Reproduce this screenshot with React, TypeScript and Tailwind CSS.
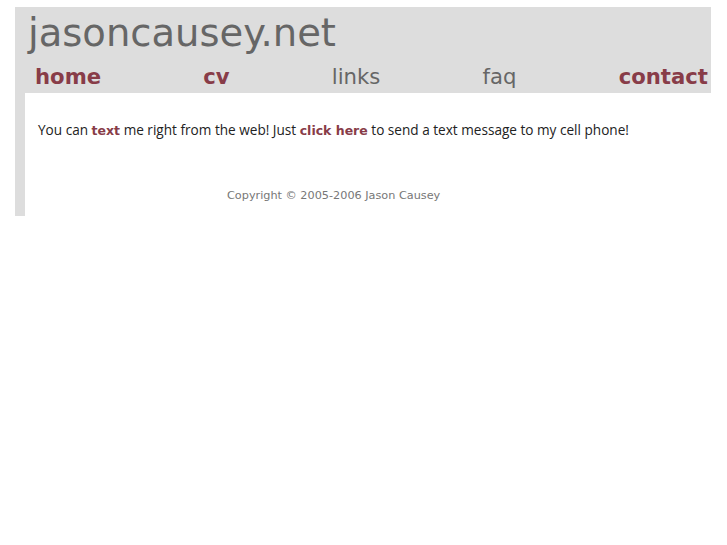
export default function App() {
  return (
    <div className="min-h-screen bg-white pt-[7px] pl-[15px] font-['DejaVu_Sans',sans-serif]">
      <div className="w-[696px]">
        <header className="h-[86px] bg-[#dddddd]">
          <h1 className="pl-[13px] pt-[3px] text-[38.5px] leading-[45px] text-[#666666]">
            jasoncausey.net
          </h1>
          <nav className="mt-[9px] flex justify-between pl-[20px] pr-[3px] text-[21.2px] leading-[25px]">
            <a className="font-bold text-[#883c48]">home</a>
            <a className="font-bold text-[#883c48]">cv</a>
            <a className="text-[#666666]">links</a>
            <a className="text-[#666666]">faq</a>
            <a className="font-bold text-[#883c48]">contact</a>
          </nav>
        </header>
        <div className="flex">
          <div className="w-[10px] h-[123px] bg-[#dddddd]" />
          <main className="flex-1">
            <p className="pl-[13px] pt-[29px] text-[13.6px] leading-[16px] text-[#222222] font-['Open_Sans',sans-serif]">
              You can{" "}
              <a className="font-['DejaVu_Sans',sans-serif] text-[12.5px] font-bold text-[#883c48]">text</a>{" "}
              me right from the web! Just{" "}
              <a className="font-['DejaVu_Sans',sans-serif] text-[12.5px] font-bold text-[#883c48]">click here</a>{" "}
              to send a text message to my cell phone!
            </p>
            <p className="pl-[202px] pt-[50px] text-[11.25px] leading-[14px] text-[#777777]">
              Copyright © 2005-2006 Jason Causey
            </p>
          </main>
        </div>
      </div>
    </div>
  );
}
